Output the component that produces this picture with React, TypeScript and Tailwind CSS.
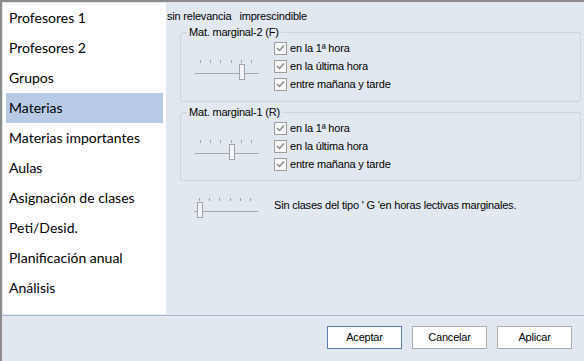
import React from 'react';

const menu = [
    'Profesores 1',
    'Profesores 2',
    'Grupos',
    'Materias',
    'Materias importantes',
    'Aulas',
    'Asignación de clases',
    'Peti/Desid.',
    'Planificación anual',
    'Análisis',
];

const ticks = [5, 15, 25, 36, 46, 56];

const Slider = ({ pos }: { pos: number }) => (
    <svg width="64" height="20" className="block shrink-0">
        {ticks.map((t) => (
            <line key={t} x1={t + 0.5} y1="0" x2={t + 0.5} y2="3" stroke="#a3a3a3" />
        ))}
        <line x1="0" y1="13.5" x2="64" y2="13.5" stroke="#a4a8ae" />
        <rect x={ticks[pos] - 2 + 0.5} y="4.5" width="5" height="15" fill="#f3f5f8" stroke="#a0a4aa" />
    </svg>
);

const Check = ({ label }: { label: string }) => (
    <div className="h-[18px] flex items-center">
        <svg width="13" height="13" className="block shrink-0">
            <rect x="0.5" y="0.5" width="12" height="12" fill="#f7f7f7" stroke="#9d9d9d" />
            <polyline points="3,6 5.5,8.5 10,3.5" fill="none" stroke="#8a8a8a" strokeWidth="1.5" />
        </svg>
        <span className="ml-[3px] leading-[13px]">{label}</span>
    </div>
);

const GroupBox = ({ title, pos, height }: { title: string; pos: number; height: string }) => (
    <div className={`relative ml-[13px] w-[401px] ${height} border border-[#d2d4d8] rounded-[3px]`}>
        <span className="absolute -top-[7px] left-[6px] px-[2px] leading-[13px] bg-[#e2e8f0]">{title}</span>
        <div className="flex pt-[6px] pl-[14px]">
            <div className="mt-[21px]">
                <Slider pos={pos} />
            </div>
            <div className="ml-[15px] flex flex-col">
                <Check label="en la 1ª hora" />
                <Check label="en la última hora" />
                <Check label="entre mañana y tarde" />
            </div>
        </div>
    </div>
);

const App: React.FC = () => {
    return (
        <div className="w-[584px] h-[361px] overflow-hidden flex flex-col bg-[#e2e8f0] border-t-2 border-l-2 border-[#8c8c8c] text-black">
            <div className="h-[313px] flex">
                <div className="mt-[1px] ml-[1px] w-[163px] h-[311px] bg-white font-['Lato','Noto_Sans',sans-serif] text-[14px]">
                    {menu.map((m) => (
                        <div
                            key={m}
                            className={`mx-[3px] h-[30px] flex items-center pl-[3px] pb-[1px] ${m === 'Materias' ? 'bg-[#b8cbe6]' : ''}`}
                        >
                            {m}
                        </div>
                    ))}
                </div>
                <div className="flex-1 pl-[1px] font-['Liberation_Sans',Arial,sans-serif] text-[11px] tracking-[-0.2px]">
                    <div className="mt-[8px] h-[13px] leading-[13px] flex">
                        <span>sin relevancia</span>
                        <span className="ml-[8px]">imprescindible</span>
                    </div>
                    <div className="mt-[9px]">
                        <GroupBox title="Mat. marginal-2 (F)" pos={4} height="h-[70px]" />
                    </div>
                    <div className="mt-[10px]">
                        <GroupBox title="Mat. marginal-1 (R)" pos={3} height="h-[69px]" />
                    </div>
                    <div className="mt-[17px] ml-[27px] flex items-start">
                        <Slider pos={0} />
                        <span className="ml-[16px] mt-[1px] leading-[13px]">
                            Sin clases del tipo ' G 'en horas lectivas marginales.
                        </span>
                    </div>
                </div>
            </div>
            <div className="flex-1 border-t border-[#aab8cc] flex justify-end items-start pt-[10px] pr-[12px] gap-[10px] font-['Liberation_Sans',Arial,sans-serif] text-[11px] tracking-[-0.2px]">
                <button className="w-[75px] h-[23px] bg-white border border-[#5a7bb0]">Aceptar</button>
                <button className="w-[75px] h-[23px] bg-white border border-[#adadad]">Cancelar</button>
                <button className="w-[75px] h-[23px] bg-white border border-[#adadad]">Aplicar</button>
            </div>
        </div>
    );
};

export default App;
